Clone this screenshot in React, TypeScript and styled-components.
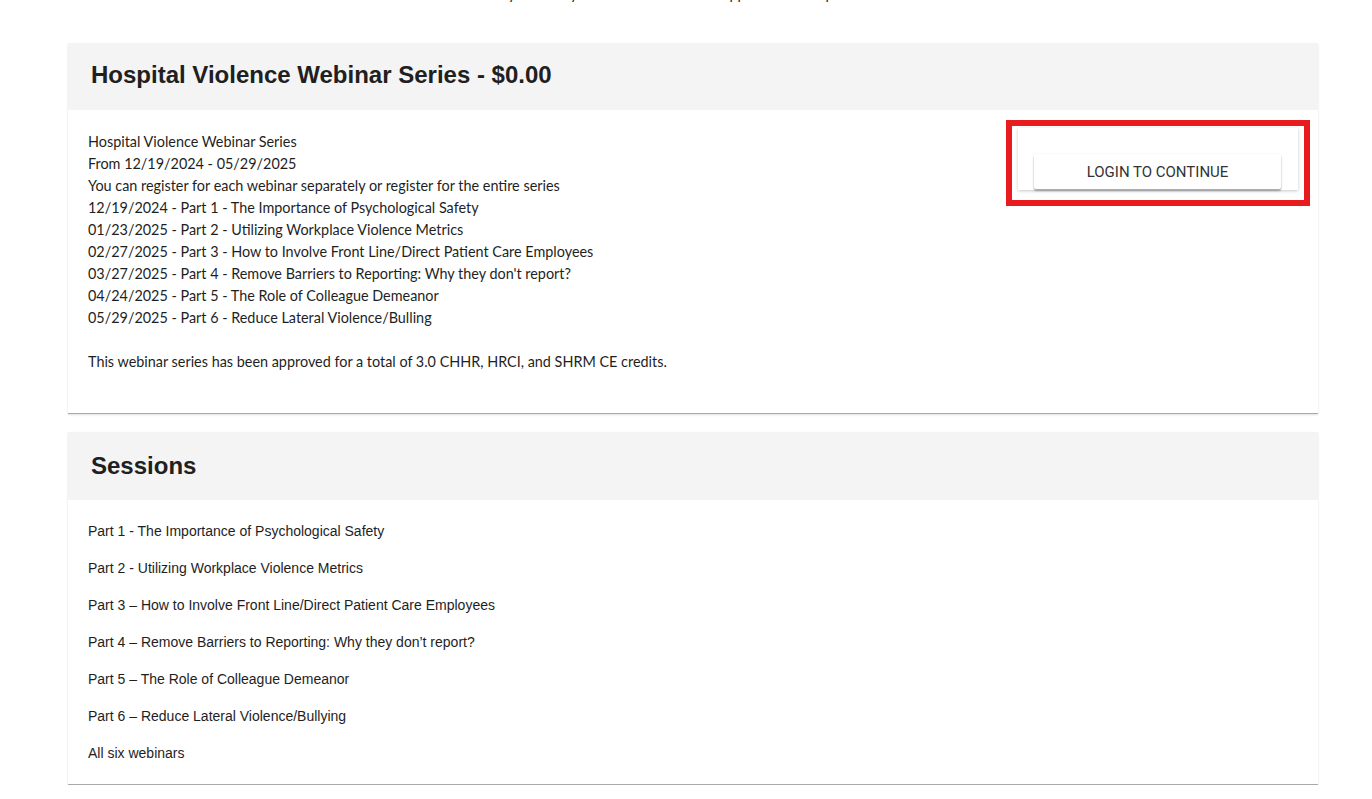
import React from "react";
import styled, { createGlobalStyle } from "styled-components";

const GlobalStyle = createGlobalStyle`
  html, body { margin: 0; padding: 0; background: #ffffff; }
  body { font-family: "Liberation Sans", Arial, sans-serif; color: #212121; overflow: hidden; }
  * { box-sizing: border-box; }
`;

const Page = styled.main`
  width: 1250px;
  margin-left: 68px;
`;

const Notice = styled.p`
  margin: -17px 0 0;
  padding-left: 14px;
  font-family: Lato, "Open Sans", sans-serif;
  font-size: 14.4px;
  line-height: 22px;
  color: #1f1f1f;
  white-space: nowrap;
`;

const Card = styled.section<{ $gap: number }>`
  margin-top: ${(p) => p.$gap}px;
  background: #ffffff;
  border-bottom: 1px solid #a9a9a9;
  box-shadow: 0 1px 2px rgba(0, 0, 0, 0.12);
`;

const CardHeader = styled.header<{ $h: number; $lift: number }>`
  height: ${(p) => p.$h}px;
  background: #f4f4f4;
  display: flex;
  align-items: center;
  padding: 0 23px ${(p) => p.$lift}px;
`;

const Title = styled.h2`
  margin: 0;
  font-family: "Liberation Sans", Arial, sans-serif;
  font-weight: 700;
  font-size: 24px;
  color: #202020;
`;

const Body = styled.div`
  display: flex;
  justify-content: space-between;
  align-items: flex-start;
  padding: 10px 8px 0 20px;
`;

const Description = styled.div`
  padding: 11px 0 40px;
  font-family: Lato, "Open Sans", sans-serif;
  font-size: 14.4px;
  line-height: 22px;
  color: #1f1f1f;
`;

const Line = styled.div`
  height: 22px;
  white-space: nowrap;
`;

const ActionFrame = styled.div`
  border: 6px solid #e81c1f;
  padding: 2px 6px 10px 6px;
`;

const ActionPanel = styled.div`
  width: 280px;
  height: 62px;
  padding: 26px 17px 0 16px;
  background: #ffffff;
  box-shadow: 0 1px 3px rgba(0, 0, 0, 0.22);
`;

const LoginButton = styled.button`
  width: 247px;
  height: 35px;
  border: none;
  border-radius: 2px;
  background: #ffffff;
  box-shadow: 0 2px 2px rgba(0, 0, 0, 0.32), 0 0 2px rgba(0, 0, 0, 0.08);
  font-family: Roboto, "Liberation Sans", sans-serif;
  font-weight: 400;
  font-size: 15px;
  color: #333333;
  text-transform: uppercase;
  cursor: pointer;
`;

const SessionList = styled.ul`
  list-style: none;
  margin: 0;
  padding: 13px 20px 12px;
`;

const SessionItem = styled.li`
  height: 37px;
  line-height: 37px;
  font-family: "Liberation Sans", Arial, sans-serif;
  font-size: 14px;
  color: #1e1e1e;
  white-space: nowrap;
`;

const descriptionLines = [
  "Hospital Violence Webinar Series",
  "From 12/19/2024 - 05/29/2025",
  "You can register for each webinar separately or register for the entire series",
  "12/19/2024 - Part 1 - The Importance of Psychological Safety",
  "01/23/2025 - Part 2 - Utilizing Workplace Violence Metrics",
  "02/27/2025 - Part 3 - How to Involve Front Line/Direct Patient Care Employees",
  "03/27/2025 - Part 4 - Remove Barriers to Reporting: Why they don't report?",
  "04/24/2025 - Part 5 - The Role of Colleague Demeanor",
  "05/29/2025 - Part 6 - Reduce Lateral Violence/Bulling",
  "",
  "This webinar series has been approved for a total of 3.0 CHHR, HRCI, and SHRM CE credits.",
];

const sessions = [
  "Part 1 - The Importance of Psychological Safety",
  "Part 2 - Utilizing Workplace Violence Metrics",
  "Part 3 \u2013 How to Involve Front Line/Direct Patient Care Employees",
  "Part 4 \u2013 Remove Barriers to Reporting: Why they don\u2019t report?",
  "Part 5 \u2013 The Role of Colleague Demeanor",
  "Part 6 \u2013 Reduce Lateral Violence/Bullying",
  "All six webinars",
];

export default function App() {
  return (
    <>
      <GlobalStyle />
      <Page>
        <Notice>
          Note that these sessions will be held and cannot be attended later by the many members who are not approved at the portal.
        </Notice>
        <Card $gap={38}>
          <CardHeader $h={67} $lift={4}>
            <Title>Hospital Violence Webinar Series - $0.00</Title>
          </CardHeader>
          <Body>
            <Description>
              {descriptionLines.map((l, i) => (
                <Line key={i}>{l}</Line>
              ))}
            </Description>
            <ActionFrame>
              <ActionPanel>
                <LoginButton>Login to continue</LoginButton>
              </ActionPanel>
            </ActionFrame>
          </Body>
        </Card>
        <Card $gap={18}>
          <CardHeader $h={68} $lift={0}>
            <Title>Sessions</Title>
          </CardHeader>
          <SessionList>
            {sessions.map((s) => (
              <SessionItem key={s}>{s}</SessionItem>
            ))}
          </SessionList>
        </Card>
      </Page>
    </>
  );
}
